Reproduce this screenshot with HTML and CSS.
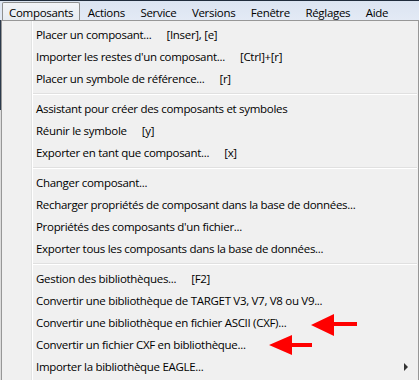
FILE: index.html
```html
<!DOCTYPE html>
<html lang="fr">
<head>
    <meta charset="UTF-8">
    <title>Composants</title>
    <link rel="stylesheet" href="styles.css">
</head>
<body>

<div class="menubar">
    <span class="menu open">Composants</span>
    <span class="menu">Actions</span>
    <span class="menu">Service</span>
    <span class="menu">Versions</span>
    <span class="menu">Fenêtre</span>
    <span class="menu">Réglages</span>
    <span class="menu">Aide</span>
</div>

<div class="dropdown">
    <div class="item">Placer un composant...<span class="key">[Inser], [e]</span></div>
    <div class="item">Importer les restes d'un composant...<span class="key">[Ctrl]+[r]</span></div>
    <div class="item">Placer un symbole de référence...<span class="key">[r]</span></div>
    <div class="sep"></div>
    <div class="item">Assistant pour créer des composants et symboles</div>
    <div class="item">Réunir le symbole<span class="key">[y]</span></div>
    <div class="item">Exporter en tant que composant...<span class="key">[x]</span></div>
    <div class="sep"></div>
    <div class="item">Changer composant...</div>
    <div class="item">Recharger propriétés de composant dans la base de données...</div>
    <div class="item">Propriétés des composants d'un fichier...</div>
    <div class="item">Exporter tous les composants dans la base de données...</div>
    <div class="sep"></div>
    <div class="item">Gestion des bibliothèques...<span class="key">[F2]</span></div>
    <div class="item">Convertir une bibliothèque de TARGET V3, V7, V8 ou V9...</div>
    <div class="item">Convertir une bibliothèque en fichier ASCII (CXF)...</div>
    <div class="item">Convertir un fichier CXF en bibliothèque...</div>
    <div class="item submenu">Importer la bibliothèque EAGLE...</div>

    <svg class="arrow arrow-one" width="48" height="24" viewBox="0 0 48 24">
        <polygon points="0,11 23,0 23,8 46,8 46,12 23,12 23,22" fill="#ff0000"/>
    </svg>
    <svg class="arrow arrow-two" width="46" height="22" viewBox="0 0 46 22">
        <polygon points="0,10 23,0 23,8 43,8 43,12 23,12 23,20" fill="#ff0000"/>
    </svg>
</div>

</body>
</html>
```

FILE: styles.css
```css
body {
    margin: 0;
    width: 419px;
    height: 380px;
    overflow: hidden;
    background: linear-gradient(to bottom, #2c3a4c 110px, #dcdcdc 110px);
    font-family: "Open Sans", "Noto Sans", sans-serif;
    font-size: 11.5px;
    letter-spacing: -0.3px;
    color: #000000;
}

.menubar {
    display: flex;
    height: 19px;
    border-top: 1px solid #1f2b3b;
    background: linear-gradient(to bottom, #dbe4f1, #e3eaf5);
    padding-left: 2px;
}

.menu {
    line-height: 17px;
    padding: 1px 7px 0 6.5px;
    margin-top: 1px;
    border: 1px solid transparent;
    border-bottom: none;
}

.menu.open {
    background: linear-gradient(to bottom, #f2f4f7, #e7ebf1);
    border-color: #8e8f8f;
    border-radius: 2px 2px 0 0;
    padding: 1px 6px 0 6px;
}

.dropdown {
    position: relative;
    margin-left: 1px;
    width: 416px;
    height: 360px;
    border: 1px solid #979797;
    border-bottom: none;
    padding-top: 3px;
    background: linear-gradient(to right, transparent 29px, #e2e3e3 29px, #e2e3e3 30px, #ffffff 30px, #ffffff 31px, transparent 31px), #f0f0f0;
}

.item {
    height: 22px;
    line-height: 22px;
    padding-left: 34px;
    white-space: nowrap;
}

.key {
    margin-left: 15px;
}

.sep {
    height: 1px;
    margin: 3px 1px 3px 31px;
    background-color: #e0e0e0;
    border-bottom: 1px solid #ffffff;
}

.submenu {
    position: relative;
}

.submenu::after {
    content: "";
    position: absolute;
    right: 10px;
    top: 7px;
    border-left: 4px solid #333333;
    border-top: 4px solid transparent;
    border-bottom: 4px solid transparent;
}

.arrow {
    position: absolute;
}

.arrow-one {
    left: 309px;
    top: 293px;
}

.arrow-two {
    left: 267px;
    top: 314px;
}
```
